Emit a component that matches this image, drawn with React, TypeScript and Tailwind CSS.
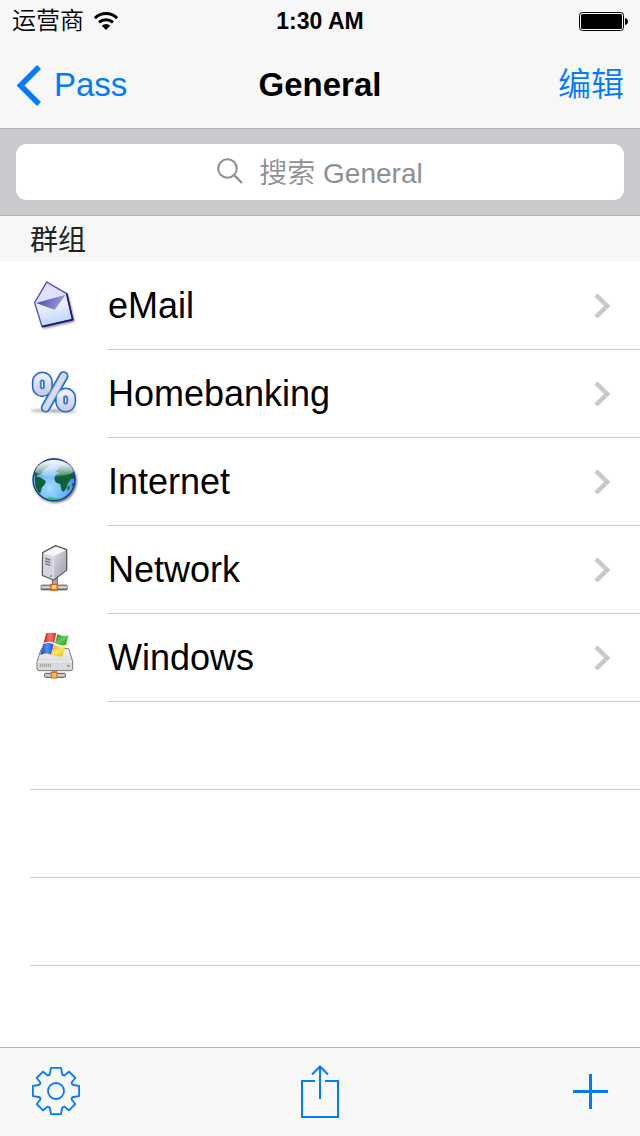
import type { ReactNode } from "react";

function MailIcon() {
  return (
    <svg viewBox="30 33 144 150" className="h-[50px] w-12" aria-hidden="true">
      <defs>
        <linearGradient id="mail-body" x1="0" y1="0" x2="0.2" y2="1">
          <stop offset="0" stopColor="#c9ccf8" />
          <stop offset="0.6" stopColor="#eceefe" />
          <stop offset="1" stopColor="#bcd8ff" />
        </linearGradient>
        <linearGradient id="mail-flap" x1="0" y1="0" x2="1" y2="0.3">
          <stop offset="0" stopColor="#3e409c" />
          <stop offset="1" stopColor="#9a9de2" />
        </linearGradient>
        <filter id="mail-shadow" x="-20%" y="-20%" width="140%" height="140%">
          <feGaussianBlur stdDeviation="2.5" />
        </filter>
      </defs>
      <path d="M48 103 L84 42 L145 75 L164 155 L70 176 Z" fill="#222" opacity="0.55" filter="url(#mail-shadow)" />
      <path d="M44 98 L80 36 L140 71 L158 149 L66 170 Z" fill="url(#mail-body)" stroke="#4a4db4" strokeWidth="4" strokeLinejoin="round" />
      <path d="M140 71 L158 149 L66 170" fill="none" stroke="#17187c" strokeWidth="5" strokeLinejoin="round" />
      <path d="M51 98 L81 42 L133 72 Z" fill="#dfe1fd" />
      <path d="M48 99 L137 74 L104 120 Z" fill="url(#mail-flap)" />
      <path d="M49 102 L104 121 L138 77" fill="none" stroke="#fff" strokeWidth="2" opacity="0.6" />
    </svg>
  );
}

function PercentIcon() {
  return (
    <svg viewBox="30 33 144 150" className="h-[50px] w-12" aria-hidden="true">
      <defs>
        <linearGradient id="pct" x1="0" y1="0" x2="0" y2="1">
          <stop offset="0" stopColor="#eeeef4" />
          <stop offset="1" stopColor="#cfcfdb" />
        </linearGradient>
        <filter id="pct-shadow" x="-20%" y="-50%" width="140%" height="200%">
          <feGaussianBlur stdDeviation="2.5" />
        </filter>
      </defs>
      <ellipse cx="76" cy="158" rx="44" ry="6" fill="#777" opacity="0.45" filter="url(#pct-shadow)" />
      <ellipse cx="132" cy="160" rx="38" ry="5" fill="#777" opacity="0.45" filter="url(#pct-shadow)" />
      <g fill="none" strokeLinecap="round">
        <g stroke="#1857cc">
          <rect x="50" y="55" width="34" height="48" rx="17" strokeWidth="29" />
          <rect x="120" y="103" width="34" height="46" rx="17" strokeWidth="29" />
          <path d="M131 54 L77 149" strokeWidth="29" />
        </g>
        <g stroke="#4b9bfa">
          <rect x="50" y="55" width="34" height="48" rx="17" strokeWidth="23" />
          <rect x="120" y="103" width="34" height="46" rx="17" strokeWidth="23" />
          <path d="M131 54 L77 149" strokeWidth="23" />
        </g>
        <g stroke="url(#pct)">
          <rect x="50" y="55" width="34" height="48" rx="17" strokeWidth="18" />
          <rect x="120" y="103" width="34" height="46" rx="17" strokeWidth="18" />
        </g>
        <path d="M131 54 L77 149" stroke="#dcdce6" strokeWidth="17" />
      </g>
    </svg>
  );
}

function GlobeIcon() {
  return (
    <svg viewBox="30 33 144 150" className="h-[50px] w-12" aria-hidden="true">
      <defs>
        <radialGradient id="sea" cx="0.4" cy="0.7" r="0.7">
          <stop offset="0" stopColor="#a5dcff" />
          <stop offset="0.6" stopColor="#66b0f8" />
          <stop offset="1" stopColor="#3a7ad8" />
        </radialGradient>
        <linearGradient id="gloss" x1="0" y1="0" x2="0" y2="1">
          <stop offset="0" stopColor="#fff" stopOpacity="0.98" />
          <stop offset="0.5" stopColor="#fff" stopOpacity="0.7" />
          <stop offset="1" stopColor="#fff" stopOpacity="0.2" />
        </linearGradient>
        <clipPath id="globe-clip">
          <circle cx="102" cy="101" r="61" />
        </clipPath>
        <filter id="globe-shadow" x="-20%" y="-20%" width="140%" height="140%">
          <feGaussianBlur stdDeviation="2.5" />
        </filter>
      </defs>
      <circle cx="106" cy="106" r="65" fill="#222" opacity="0.6" filter="url(#globe-shadow)" />
      <circle cx="102" cy="101" r="65" fill="#16309c" />
      <circle cx="102" cy="101" r="61" fill="url(#sea)" />
      <g clipPath="url(#globe-clip)" fill="#0d6136">
        <path d="M40 66 L58 52 L86 44 L92 54 L80 66 L70 72 L64 84 L54 86 L46 92 L40 84 Z" />
        <path d="M44 90 L60 94 L77 105 L75 115 L66 124 L61 142 L54 139 L46 121 Z" />
        <path d="M107 86 L122 81 L138 86 L146 98 L152 101 L144 111 L140 125 L131 138 L124 131 L121 115 L107 109 L103 98 Z" />
        <path d="M108 78 L118 63 L132 57 L156 64 L166 82 L164 100 L155 98 L149 103 L141 90 L126 82 Z" />
        <path d="M143 123 L149 117 L148 129 L142 134 Z M155 113 L164 110 L160 128 Z" />
        <path d="M79 157 L92 153 L103 157 L119 156 L109 165 L91 163 Z" fill="#25c45c" />
      </g>
      <path d="M45 78 C53 30 151 30 161 78 C139 95 65 96 45 78 Z" fill="url(#gloss)" />
    </svg>
  );
}

function ServerIcon() {
  return (
    <svg viewBox="30 33 144 150" className="h-[50px] w-12" aria-hidden="true">
      <defs>
        <linearGradient id="srv-side" x1="0" y1="0" x2="1" y2="1">
          <stop offset="0" stopColor="#d9d9e4" />
          <stop offset="1" stopColor="#9c9cad" />
        </linearGradient>
        <linearGradient id="pipe" x1="0" y1="0" x2="0" y2="1">
          <stop offset="0" stopColor="#777" />
          <stop offset="0.4" stopColor="#e8e8e8" />
          <stop offset="1" stopColor="#555" />
        </linearGradient>
      </defs>
      <path d="M97 128 H112 V156 H97 Z" fill="#aaaab4" stroke="#666" strokeWidth="3" />
      <rect x="63" y="153" width="79" height="15" rx="3" fill="url(#pipe)" stroke="#555" strokeWidth="2" />
      <path d="M93 151 H112 V168 H93 Z" fill="#ffc64a" stroke="#e65313" strokeWidth="4" />
      <path d="M97 155 H107 V161 H97 Z" fill="#fff0ae" />
      <path d="M68 56 L107 35 L140 47 V108 L101 138 L67 124 Z" fill="#e5e5ed" stroke="#595961" strokeWidth="4" strokeLinejoin="round" />
      <path d="M102 67 L138 49 V107 L102 134 Z" fill="url(#srv-side)" />
      <path d="M71 57 L107 39 L136 49 L102 65 Z" fill="#f7f7fb" />
      <path d="M70 61 L100 69 V134 L70 122 Z" fill="#d5d5df" />
      <path d="M75 73 L91 78 M75 81 L91 86 M75 89 L91 94" stroke="#747486" strokeWidth="4" />
      <circle cx="93" cy="126" r="3" fill="#48b838" />
    </svg>
  );
}

function WindowsDriveIcon() {
  return (
    <svg viewBox="30 33 144 150" className="h-[50px] w-12" aria-hidden="true">
      <defs>
        <linearGradient id="drive" x1="0" y1="0" x2="0" y2="1">
          <stop offset="0" stopColor="#fafafa" />
          <stop offset="1" stopColor="#c4c4c8" />
        </linearGradient>
        <linearGradient id="flag-red" x1="0" y1="0" x2="1" y2="0">
          <stop offset="0" stopColor="#bd2020" />
          <stop offset="0.5" stopColor="#fa7770" />
          <stop offset="1" stopColor="#d82b28" />
        </linearGradient>
        <linearGradient id="flag-green" x1="0" y1="0" x2="1" y2="1">
          <stop offset="0" stopColor="#188c27" />
          <stop offset="0.5" stopColor="#62cc57" />
          <stop offset="1" stopColor="#23982c" />
        </linearGradient>
        <linearGradient id="flag-blue" x1="0" y1="0" x2="1" y2="0">
          <stop offset="0" stopColor="#1747b0" />
          <stop offset="0.5" stopColor="#558ff5" />
          <stop offset="1" stopColor="#1c55cb" />
        </linearGradient>
        <linearGradient id="flag-yellow" x1="0" y1="0" x2="1" y2="1">
          <stop offset="0" stopColor="#e9a508" />
          <stop offset="0.5" stopColor="#ffe65c" />
          <stop offset="1" stopColor="#efaf10" />
        </linearGradient>
      </defs>
      <path d="M97 145 H110 V156 H97 Z" fill="#aaa" stroke="#666" strokeWidth="2" />
      <rect x="74" y="154" width="62" height="12" rx="3" fill="#ccc" stroke="#555" strokeWidth="3" />
      <path d="M94 151 H111 V168 H94 Z" fill="#ffbe52" stroke="#c65f21" strokeWidth="3" />
      <path d="M64 80 H146 L158 118 V140 Q158 146 151 146 H57 Q51 146 51 139 V118 Z" fill="url(#drive)" stroke="#77777b" strokeWidth="3" strokeLinejoin="round" />
      <path d="M53 118 H156 V139 Q156 144 150 144 H59 Q53 144 53 138 Z" fill="#dadade" />
      <path d="M53 119 H156" stroke="#fff" strokeWidth="2" />
      <path d="M61 125 V135 M67 125 V135 M73 125 V135 M79 125 V135 M85 125 V135 M91 125 V135" stroke="#999" strokeWidth="3" />
      <rect x="141" y="129" width="8" height="5" fill="#43c649" />
      <path d="M78 34 Q93 25 109 32 L103 63 Q86 55 71 63 Z" fill="url(#flag-red)" />
      <path d="M112 36 Q126 45 146 40 L138 69 Q121 73 105 64 Z" fill="url(#flag-green)" />
      <path d="M69 67 Q84 59 101 67 L93 98 Q77 90 61 99 Z" fill="url(#flag-blue)" />
      <path d="M103 69 Q119 77 136 72 L127 102 Q111 107 94 98 Z" fill="url(#flag-yellow)" />
    </svg>
  );
}

const groups: { name: string; icon: ReactNode }[] = [
  { name: "eMail", icon: <MailIcon /> },
  { name: "Homebanking", icon: <PercentIcon /> },
  { name: "Internet", icon: <GlobeIcon /> },
  { name: "Network", icon: <ServerIcon /> },
  { name: "Windows", icon: <WindowsDriveIcon /> },
];

function StatusBar() {
  return (
    <div className="grid h-10 grid-cols-[1fr_auto_1fr] items-center px-3 pt-0.5">
      <div className="flex items-center gap-2.5">
        <span className="text-2xl leading-8 font-[350]">运营商</span>
        <svg viewBox="0 0 24 18" className="h-[18px] w-6" aria-label="Wi-Fi">
          <g fill="none" stroke="#000" strokeWidth="3">
            <path d="M0.9 6.1 A16 16 0 0 1 23.1 6.1" />
            <path d="M5 10.3 A10.5 10.5 0 0 1 19 10.3" />
          </g>
          <path d="M12 18 L7.8 13.7 A6 6 0 0 1 16.2 13.7 Z" />
        </svg>
      </div>
      <time className="text-[23px] leading-8 font-bold">1:30 AM</time>
      <svg viewBox="0 0 49 19" className="h-[19px] w-[49px] justify-self-end" aria-label="Battery full">
        <rect x="0.5" y="0.5" width="44" height="18" rx="3" fill="#fff" stroke="#000" strokeWidth="1" />
        <rect x="2" y="2" width="41" height="15" rx="1.5" />
        <path d="M46 6 Q49 7 49 9.5 Q49 12 46 13 Z" />
      </svg>
    </div>
  );
}

function Toolbar() {
  return (
    <footer className="grid h-[89px] shrink-0 grid-cols-3 items-center border-t border-[#b2b2b2] bg-[#f8f8f8] px-8 pb-0.5 text-[#007aff]">
      <button type="button" aria-label="Settings" className="justify-self-start">
        <svg viewBox="-24 -24 48 48" className="size-12" fill="none" stroke="currentColor" strokeWidth="1.8" strokeLinejoin="round">
          <path d="M-8.5 -15.6 Q-6.3 -15.6 -6 -17.5 L-5.1 -23.1 H5.1 L6 -17.5 Q6.3 -15.6 8.5 -15.6 L13 -19.3 L19.3 -13 L15.6 -8.5 Q15.6 -6.3 17.5 -6 L23.1 -5.1 V5.1 L17.5 6 Q15.6 6.3 15.6 8.5 L19.3 13 L13 19.3 L8.5 15.6 Q6.3 15.6 6 17.5 L5.1 23.1 H-5.1 L-6 17.5 Q-6.3 15.6 -8.5 15.6 L-13 19.3 L-19.3 13 L-15.6 8.5 Q-15.6 6.3 -17.5 6 L-23.1 5.1 V-5.1 L-17.5 -6 Q-15.6 -6.3 -15.6 -8.5 L-19.3 -13 L-13 -19.3 Z" />
          <circle r="8" />
        </svg>
      </button>
      <button type="button" aria-label="Share" className="justify-self-center">
        <svg viewBox="0 0 38 54" className="h-[54px] w-[38px]" fill="none" stroke="currentColor" strokeWidth="2">
          <path d="M14 17 H1 V53 H37 V17 H24" />
          <path d="M19 35 V3 M11 10.5 L19 2.5 L27 10.5" />
        </svg>
      </button>
      <button type="button" aria-label="Add" className="justify-self-end">
        <svg viewBox="0 0 35 35" className="size-[35px]" stroke="currentColor" strokeWidth="3">
          <path d="M0 17.5 H35 M17.5 0 V35" />
        </svg>
      </button>
    </footer>
  );
}

export default function App() {
  return (
    <div
      lang="zh-CN"
      className="flex min-h-screen flex-col bg-white font-['Liberation_Sans','Noto_Sans_CJK_SC',sans-serif] text-black"
    >
      <header className="border-b border-[#b2b2b2] bg-[#f7f7f7]">
        <StatusBar />
        <nav className="grid h-[88px] grid-cols-[1fr_auto_1fr] items-center px-4 pt-0.5 text-[#007aff]">
          <a href="#pass" className="flex items-center gap-3 justify-self-start text-[33px] leading-10">
            <svg viewBox="0 0 26 41" className="h-[41px] w-[26px]" fill="none" stroke="currentColor" strokeWidth="5.5" aria-hidden="true">
              <path d="M23 2 L4.5 20.5 L23 39" />
            </svg>
            Pass
          </a>
          <h1 className="text-[33px] leading-10 font-bold text-black">General</h1>
          <button type="button" className="justify-self-end text-[33px] leading-10 font-[350]">
            编辑
          </button>
        </nav>
      </header>

      <div role="search" className="border-b border-[#b2b2b2] bg-[#c9c9ce] px-4 py-[15px]">
        <label className="flex h-14 items-center justify-center gap-4 rounded-[10px] bg-white pb-[3px] text-[#8e8e93]">
          <svg viewBox="0 0 26 26" className="size-[26px]" fill="none" stroke="currentColor" strokeWidth="2" aria-hidden="true">
            <circle cx="10.5" cy="10.5" r="9.3" />
            <path d="M17 17 L25 25" strokeWidth="2.4" />
          </svg>
          <input
            type="text"
            aria-label="搜索 General"
            placeholder="搜索 General"
            className="field-sizing-content text-[28px] leading-10 font-[350] text-black outline-none placeholder:text-[#8e8e93]"
          />
        </label>
      </div>

      <main className="flex-1">
        <h2 className="h-[46px] bg-[#f7f7f7] px-[30px] text-[28px] leading-[50px] text-[#222]">群组</h2>
        <ul>
          {groups.map((group) => (
            <li key={group.name}>
              <a href={`#${group.name}`} className="flex h-[88px] items-center gap-[30px] pl-[30px]">
                {group.icon}
                <span className="flex h-full flex-1 items-center justify-between border-b border-[#c8c7cc] pt-px pr-[30px] text-4xl">
                  {group.name}
                  <svg viewBox="0 0 16 26" className="h-[26px] w-4" fill="none" stroke="#c7c7cc" strokeWidth="4.5" aria-hidden="true">
                    <path d="M2 2 L13 13 L2 24" />
                  </svg>
                </span>
              </a>
            </li>
          ))}
        </ul>
        <div aria-hidden="true" className="pl-[30px]">
          <div className="h-[88px] border-b border-[#c8c7cc]" />
          <div className="h-[88px] border-b border-[#c8c7cc]" />
          <div className="h-[88px] border-b border-[#c8c7cc]" />
        </div>
      </main>

      <Toolbar />
    </div>
  );
}
